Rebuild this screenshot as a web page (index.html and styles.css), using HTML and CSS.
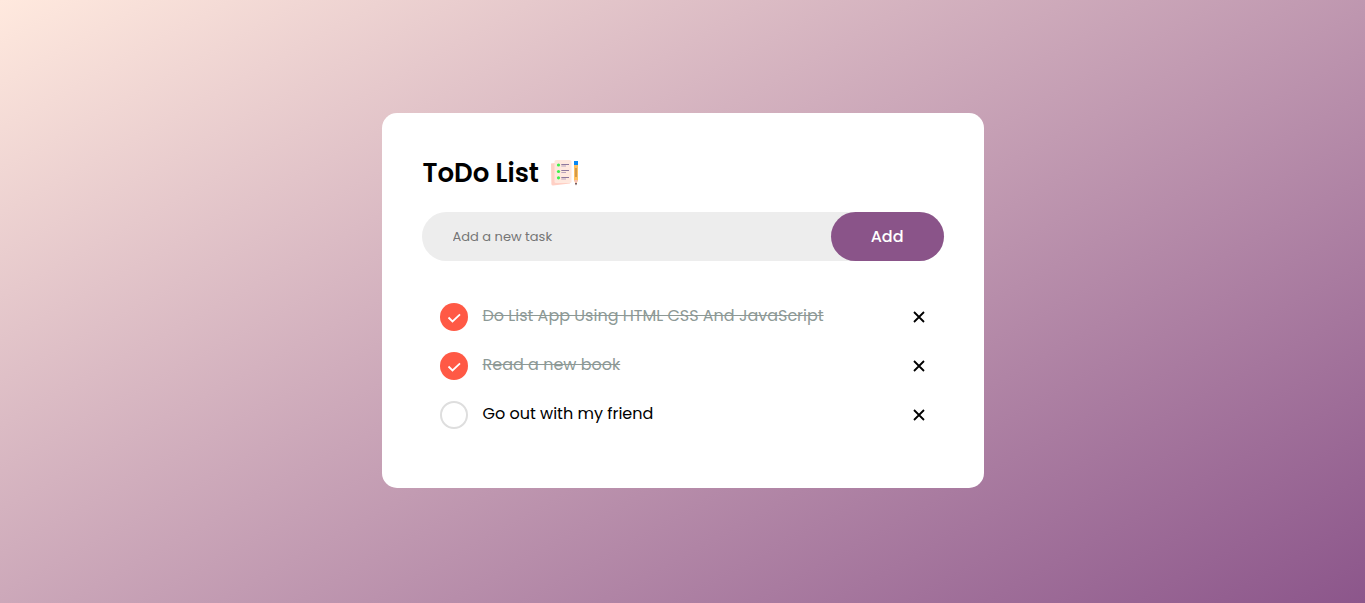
FILE: index.html
```html
<!DOCTYPE html>
<html lang="en">
<head>
<meta charset="utf-8">
<meta name="viewport" content="width=device-width, initial-scale=1">
<title>ToDo List</title>
<link rel="stylesheet" href="styles.css">
</head>
<body>
<main class="card">
  <h1 class="title">ToDo List
    <svg class="title-icon" viewBox="0 0 30 30" aria-hidden="true">
      <path d="M1 5.500L18 3.500L20 25.500L3 27.500Q1.500 27.500 1.400 26Z" fill="#ffd0c5"/>
      <rect x="4.500" y="2" width="17" height="23" rx="1.500" fill="#ffe8de"/>
      <g fill="#3df04b"><circle cx="8.500" cy="7" r="1.600"/><circle cx="8.500" cy="13.500" r="1.600"/><circle cx="8.500" cy="19.800" r="1.600"/></g>
      <path d="M11.300 6.500h7.700M11.300 12.500h7.700M11.300 19.500h7.700" stroke="#8d789d" stroke-width="1"/>
      <path d="M11.300 8h4.700M11.300 14.500h4.700M11.300 21h4.700" stroke="#b9a3bb" stroke-width="1"/>
      <path d="M24 6h4v16l-2 5l-2-5z" fill="#ffc05f"/>
      <path d="M24 3h4v4h-4z" fill="#0788f5"/>
      <path d="M26 10v9" stroke="#a67534" stroke-width="1"/>
      <path d="M24.300 22h3.400L26 27z" fill="#f5c0b8"/>
      <path d="M25.200 25h1.600L26 27.500z" fill="#30233c"/>
    </svg>
  </h1>
  <form class="entry">
    <input class="entry-input" type="text" placeholder="Add a new task" aria-label="New task">
    <button class="entry-button" type="button">Add</button>
  </form>
  <ul class="tasks">
    <li class="task">
      <input class="task-check" type="checkbox" id="task-1" checked>
      <label class="task-label" for="task-1">Do List App Using HTML CSS And JavaScript</label>
      <button class="task-remove" type="button" aria-label="Remove task"><svg class="cross" viewBox="0 0 12 12"><path d="M1 1l10 10M11 1l-10 10"/></svg></button>
    </li>
    <li class="task">
      <input class="task-check" type="checkbox" id="task-2" checked>
      <label class="task-label" for="task-2">Read a new book</label>
      <button class="task-remove" type="button" aria-label="Remove task"><svg class="cross" viewBox="0 0 12 12"><path d="M1 1l10 10M11 1l-10 10"/></svg></button>
    </li>
    <li class="task">
      <input class="task-check" type="checkbox" id="task-3">
      <label class="task-label" for="task-3">Go out with my friend</label>
      <button class="task-remove" type="button" aria-label="Remove task"><svg class="cross" viewBox="0 0 12 12"><path d="M1 1l10 10M11 1l-10 10"/></svg></button>
    </li>
  </ul>
</main>
</body>
</html>
```
FILE: styles.css
```css
* {
  box-sizing: border-box;
  margin: 0;
  padding: 0;
}

body {
  min-height: 100vh;
  display: flex;
  align-items: center;
  justify-content: center;
  padding-bottom: 2px;
  font-family: Poppins, Inter, "Open Sans", sans-serif;
  background: linear-gradient(151deg, #ffe9de, #8c568b);
}

.card {
  width: 100%;
  max-width: 602px;
  padding: 40px 40px 49px;
  border-radius: 15px;
  background: #fff;
}

.title {
  display: flex;
  align-items: center;
  gap: 11px;
  padding: 5px 0 0 1px;
  margin-bottom: 24px;
  font-size: 26px;
  font-weight: 600;
  line-height: 30px;
}

.title-icon {
  width: 30px;
  height: 30px;
}

.entry {
  display: flex;
  border-radius: 30px;
  background: #ededed;
  margin-bottom: 31px;
}

.entry-input {
  flex: 1;
  min-width: 0;
  padding: 0 31px;
  border: 0;
  outline: 0;
  background: transparent;
  font: 400 13px/20px Poppins, Inter, sans-serif;
}

.entry-input::placeholder {
  color: #757575;
}

.entry-button {
  padding: 12px 40px;
  border: 0;
  border-radius: 30px;
  background: #8a5489;
  color: #fff;
  font: 500 16px/25px Poppins, Inter, sans-serif;
  cursor: pointer;
}

.tasks {
  list-style: none;
}

.task {
  display: flex;
  align-items: center;
  height: 49px;
  padding: 0 19px 0 18px;
}

.task-check {
  appearance: none;
  flex: none;
  width: 28px;
  height: 28px;
  margin-right: 15px;
  border: 2px solid #dedede;
  border-radius: 50%;
  cursor: pointer;
}

.task-check:checked {
  border: 0;
  background: #ff5945 url("data:image/svg+xml,%3Csvg xmlns='http://www.w3.org/2000/svg' viewBox='0 0 28 28'%3E%3Cpath d='M8.500 14.500l4 4L20 11.300' fill='none' stroke='white' stroke-width='1.800'/%3E%3C/svg%3E") center / 28px no-repeat;
}

.task-label {
  flex: 1;
  padding-bottom: 1px;
  font-size: 16px;
  font-weight: 400;
  line-height: 24px;
  cursor: pointer;
}

.task-check:checked + .task-label {
  color: #8d9996;
  text-decoration: line-through;
}

.task-remove {
  display: flex;
  border: 0;
  background: transparent;
  cursor: pointer;
}

.cross {
  width: 12px;
  height: 12px;
  fill: none;
  stroke: #000;
  stroke-width: 1.8;
}
```
